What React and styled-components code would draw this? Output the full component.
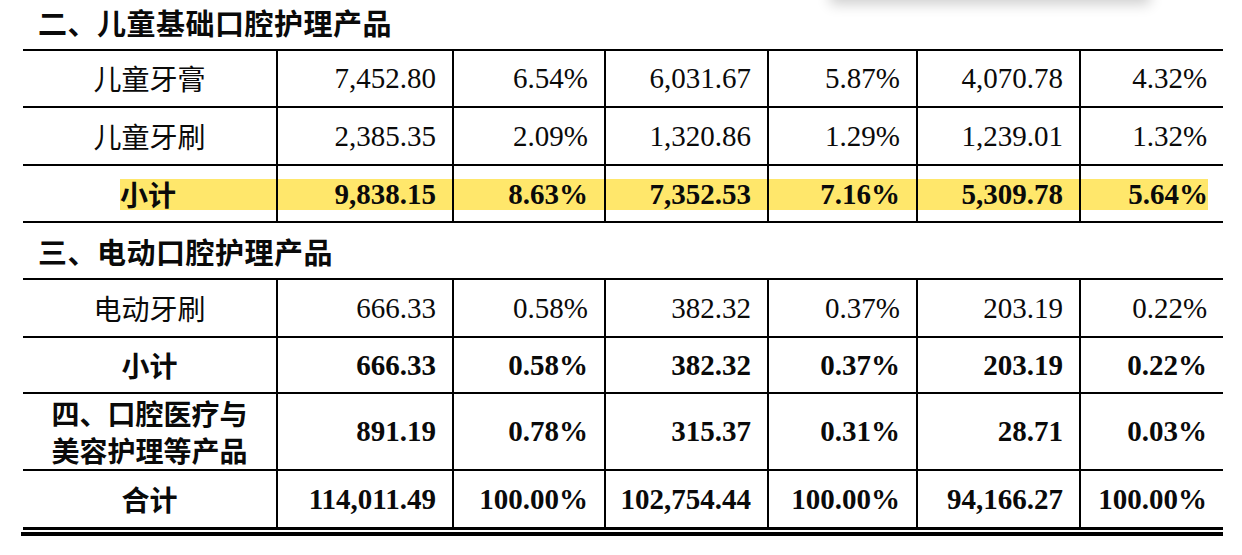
import styled, { createGlobalStyle } from 'styled-components';

const GlobalStyle = createGlobalStyle`
  html, body {
    margin: 0;
    padding: 0;
    background: #ffffff;
    overflow: hidden;
  }
  body {
    font-family: "Liberation Serif", "Noto Sans CJK SC", serif;
    color: #0a0a0a;
  }
`;

const Page = styled.div`
  position: relative;
  margin-top: -6px;
  padding-left: 23px;
  width: 1200px;
`;

const PopupShadow = styled.div`
  position: absolute;
  top: -36px;
  left: 830px;
  width: 320px;
  height: 40px;
  background: #fff;
  box-shadow: 0 6px 14px rgba(0, 0, 0, 0.2);
`;

const TableWrap = styled.div`
  padding-bottom: 2px;
  border-bottom: 4px solid #000;
  margin-left: -2px;
  padding-left: 2px;
`;

const Table = styled.table`
  width: 1200px;
  border-collapse: collapse;
  table-layout: fixed;
`;

const Row = styled.tr`
  border-bottom: ${(p) => (p.$last ? '3px' : '2px')} solid #000;
`;

const SectionCell = styled.td`
  height: 55px;
  padding: 0 0 0 15px;
  font-family: "Noto Sans CJK SC", sans-serif;
  font-weight: 700;
  font-size: 29px;
  letter-spacing: 0.5px;
  vertical-align: middle;
`;

const Cell = styled.td`
  height: ${(p) => p.$h || 55}px;
  padding: 0 ${(p) => (p.$label || p.$hl ? 0 : 16)}px 0 0;
  border-left: ${(p) => (p.$label ? 'none' : '2px solid #000')};
  text-align: ${(p) => (p.$label ? 'center' : 'right')};
  vertical-align: middle;
  font-size: 29px;
  font-weight: ${(p) => (p.$bold ? 700 : 400)};
  white-space: nowrap;
`;

const Label = styled.span`
  font-family: "Noto Sans CJK SC", sans-serif;
  font-size: 28px;
  font-weight: ${(p) => (p.$bold ? 700 : 400)};
  line-height: ${(p) => (p.$inMark ? 31 : 37)}px;
  display: inline-block;
`;

const LabelLine = styled.div`
  height: 37px;
  line-height: 37px;
`;

const Mark = styled.span`
  display: block;
  height: 31px;
  line-height: 31px;
  margin-top: 2px;
  background: #ffe76b;
  text-align: ${(p) => (p.$label ? 'left' : 'right')};
  margin-left: ${(p) => (p.$label ? 97 : 0)}px;
  margin-right: ${(p) => (p.$end ? 15 : 0)}px;
  padding-right: ${(p) => (p.$label || p.$end ? 0 : 16)}px;
`;

const widths = [254, 176, 152, 163, 149, 163, 143];

const sections = [
  {
    title: '二、儿童基础口腔护理产品',
    rows: [
      { label: '儿童牙膏', values: ['7,452.80', '6.54%', '6,031.67', '5.87%', '4,070.78', '4.32%'] },
      { label: '儿童牙刷', values: ['2,385.35', '2.09%', '1,320.86', '1.29%', '1,239.01', '1.32%'], h: 56 },
      { label: '小计', values: ['9,838.15', '8.63%', '7,352.53', '7.16%', '5,309.78', '5.64%'], bold: true, hl: true },
    ],
  },
  {
    title: '三、电动口腔护理产品',
    rows: [
      { label: '电动牙刷', values: ['666.33', '0.58%', '382.32', '0.37%', '203.19', '0.22%'], h: 56 },
      { label: '小计', values: ['666.33', '0.58%', '382.32', '0.37%', '203.19', '0.22%'], bold: true, h: 54 },
    ],
  },
];

const tailRows = [
  { label: ['四、口腔医疗与', '美容护理等产品'], values: ['891.19', '0.78%', '315.37', '0.31%', '28.71', '0.03%'], bold: true, h: 75 },
  { label: '合计', values: ['114,011.49', '100.00%', '102,754.44', '100.00%', '94,166.27', '100.00%'], bold: true, h: 56, last: true },
];

function DataRow({ row }) {
  const labelText = Array.isArray(row.label)
    ? row.label.map((l) => <LabelLine key={l}>{l}</LabelLine>)
    : row.label;
  return (
    <Row $last={row.last}>
      <Cell $label $h={row.h} $hl={row.hl}>
        {row.hl ? (
          <Mark $label>
            <Label $bold={row.bold} $inMark>{labelText}</Label>
          </Mark>
        ) : (
          <Label $bold={row.bold}>{labelText}</Label>
        )}
      </Cell>
      {row.values.map((v, i) => (
        <Cell key={i} $h={row.h} $bold={row.bold} $hl={row.hl}>
          {row.hl ? <Mark $end={i === row.values.length - 1}>{v}</Mark> : v}
        </Cell>
      ))}
    </Row>
  );
}

export default function App() {
  return (
    <>
      <GlobalStyle />
      <Page>
        <PopupShadow />
        <TableWrap>
          <Table>
            <colgroup>
              {widths.map((w, i) => (
                <col key={i} style={{ width: w }} />
              ))}
            </colgroup>
            <tbody>
              {sections.map((s) => (
                <>
                  <Row key={s.title}>
                    <SectionCell colSpan={7}>{s.title}</SectionCell>
                  </Row>
                  {s.rows.map((r, i) => (
                    <DataRow key={s.title + i} row={r} />
                  ))}
                </>
              ))}
              {tailRows.map((r, i) => (
                <DataRow key={'t' + i} row={r} />
              ))}
            </tbody>
          </Table>
        </TableWrap>
      </Page>
    </>
  );
}
